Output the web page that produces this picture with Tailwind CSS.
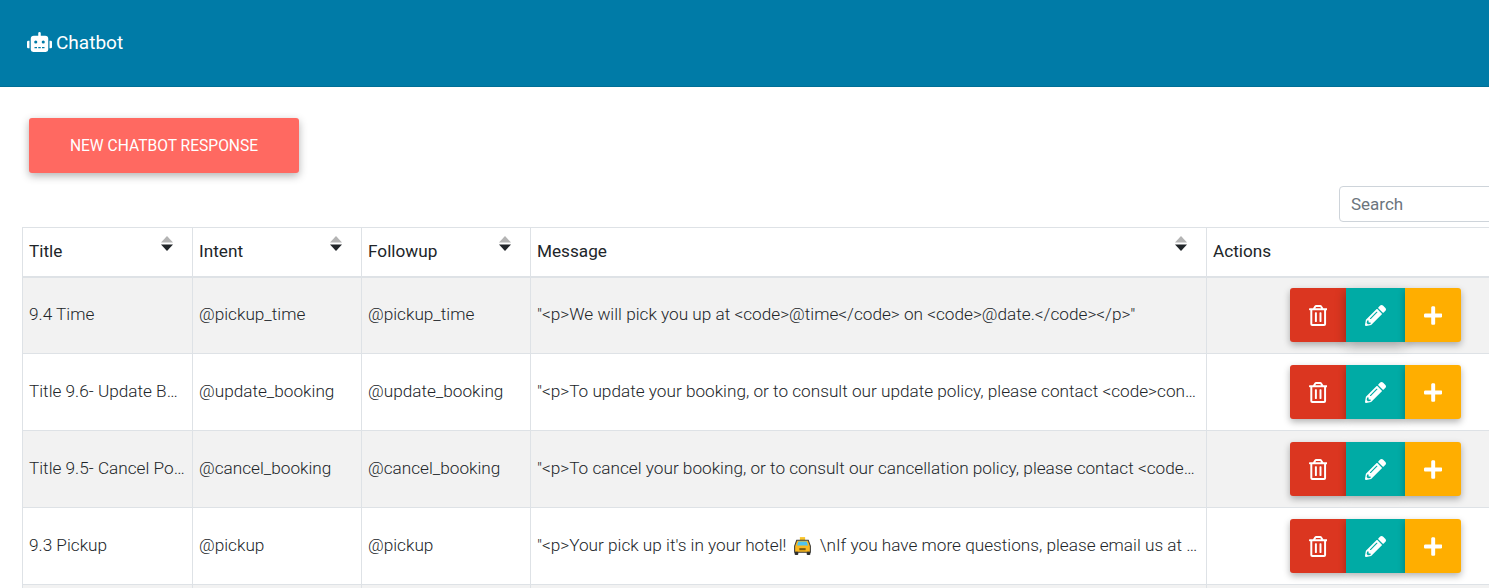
<!DOCTYPE html>
<html><head><meta charset="utf-8"><script src="https://cdn.jsdelivr.net/npm/@tailwindcss/browser@4"></script></head>
<body class="bg-white overflow-hidden font-['Roboto',sans-serif]">
<div class="h-[588px] w-[1489px] overflow-hidden">
<header class="h-[87px] bg-[#007BA7] border-b border-[#006f96] flex items-center pl-[27px] text-white text-[19px]">
<svg class="w-[25px] h-[20px] mr-[4px] -mt-[3px] fill-white" viewBox="0 0 640 512"><path d="M32,224H64V416H32A31.96166,31.96166,0,0,1,0,384V256A31.96166,31.96166,0,0,1,32,224Zm512-48V448a64.06328,64.06328,0,0,1-64,64H160a64.06328,64.06328,0,0,1-64-64V176a79.974,79.974,0,0,1,80-80H288V32a32,32,0,0,1,64,0V96H464A79.974,79.974,0,0,1,544,176ZM264,256a40,40,0,1,0-40,40A39.997,39.997,0,0,0,264,256Zm-8,128H192v32h64Zm96,0H288v32h64ZM456,256a40,40,0,1,0-40,40A39.997,39.997,0,0,0,456,256Zm-8,128H384v32h64ZM640,256V384a31.96166,31.96166,0,0,1-32,32H576V224h32A31.96166,31.96166,0,0,1,640,256Z"/></svg>
<span>Chatbot</span></header>
<main class="w-[1530px] pl-[22px] pt-[31px]">
<div class="pl-[7px]"><button class="w-[270px] h-[55px] pt-[2px] rounded-[3px] bg-[#FF6961] text-white text-[15.6px] shadow-[0_3px_8px_rgba(0,0,0,0.3)]">NEW CHATBOT RESPONSE</button></div>
<div class="flex justify-end mt-[13px] mb-[5px] h-[36px]"><input placeholder="Search" class="w-[191px] h-[36px] border border-[#ced4da] rounded-[4px] pl-[11px] text-[17px] placeholder:text-[#6c757d] outline-none"></div>
<table class="table-fixed border-collapse text-[17.2px] text-[#212529] w-[1508px]">
<colgroup><col class="w-[170px]"><col class="w-[169px]"><col class="w-[169px]"><col class="w-[676px]"><col></colgroup>
<thead><tr class="h-[49px] text-left">
<th class="relative border border-b-2 border-[#dee2e6] font-normal px-[6px]">Title<svg class="absolute right-[19px] top-[8px] w-[12px] h-[16px]" viewBox="0 0 12 16"><path d="M6 0l6 6.500H0z" fill="#b4b4b4"/><path d="M0 8.500h12L6 15z" fill="#212529"/></svg></th>
<th class="relative border border-b-2 border-[#dee2e6] font-normal px-[6px]">Intent<svg class="absolute right-[19px] top-[8px] w-[12px] h-[16px]" viewBox="0 0 12 16"><path d="M6 0l6 6.500H0z" fill="#b4b4b4"/><path d="M0 8.500h12L6 15z" fill="#212529"/></svg></th>
<th class="relative border border-b-2 border-[#dee2e6] font-normal px-[6px]">Followup<svg class="absolute right-[19px] top-[8px] w-[12px] h-[16px]" viewBox="0 0 12 16"><path d="M6 0l6 6.500H0z" fill="#b4b4b4"/><path d="M0 8.500h12L6 15z" fill="#212529"/></svg></th>
<th class="relative border border-b-2 border-[#dee2e6] font-normal px-[6px]">Message<svg class="absolute right-[19px] top-[8px] w-[12px] h-[16px]" viewBox="0 0 12 16"><path d="M6 0l6 6.500H0z" fill="#b4b4b4"/><path d="M0 8.500h12L6 15z" fill="#212529"/></svg></th>
<th class="border border-b-2 border-[#dee2e6] font-normal px-[6px]">Actions</th>
</tr></thead>
<tbody class="font-light">
<tr class="h-[77px] bg-[#f2f2f2]">
<td class="border border-[#dee2e6] px-[6px] truncate">9.4 Time</td><td class="border border-[#dee2e6] px-[6px] truncate">@pickup_time</td><td class="border border-[#dee2e6] px-[6px] truncate">@pickup_time</td><td class="border border-[#dee2e6] px-[6px] truncate">"&lt;p&gt;We will pick you up at &lt;code&gt;@time&lt;/code&gt; on &lt;code&gt;@date.&lt;/code&gt;&lt;/p&gt;"</td>
<td class="border border-[#dee2e6] pr-[45px]"><div class="flex justify-end mr-[23px]"><button class="w-[56px] h-[54px] bg-[#DB3620] rounded-l-[3px] flex items-center justify-center shadow-[0_3px_7px_rgba(0,0,0,0.3)]"><svg class="h-[21px] fill-white" viewBox="0 0 448 512"><path d="M268 416h24a12 12 0 0 0 12-12V188a12 12 0 0 0-12-12h-24a12 12 0 0 0-12 12v216a12 12 0 0 0 12 12zM432 80h-82.410l-34-56.700A48 48 0 0 0 274.410 0H173.590a48 48 0 0 0-41.160 23.300L98.410 80H16A16 16 0 0 0 0 96v16a16 16 0 0 0 16 16h16v336a48 48 0 0 0 48 48h288a48 48 0 0 0 48-48V128h16a16 16 0 0 0 16-16V96a16 16 0 0 0-16-16zM171.840 50.910A6 6 0 0 1 177 48h94a6 6 0 0 1 5.150 2.910L293.610 80H154.390zM368 464H80V128h288zm-212-48h24a12 12 0 0 0 12-12V188a12 12 0 0 0-12-12h-24a12 12 0 0 0-12 12v216a12 12 0 0 0 12 12z"/></svg></button><button class="w-[59px] h-[54px] bg-[#00ABA5] flex items-center justify-center shadow-[0_4px_10px_rgba(0,0,0,0.35)] relative"><svg class="h-[21px] fill-white" viewBox="0 0 512 512"><path d="M497.900 142.100l-46.100 46.100c-4.700 4.700-12.300 4.700-17 0l-111-111c-4.700-4.700-4.700-12.300 0-17l46.100-46.100c18.700-18.700 49.100-18.700 67.900 0l60.100 60.100c18.800 18.700 18.800 49.100 0 67.900zM284.200 99.800L21.600 362.400.4 483.900c-2.900 16.400 11.400 30.600 27.800 27.800l121.500-21.300 262.600-262.600c4.700-4.700 4.700-12.300 0-17l-111-111c-4.800-4.700-12.400-4.700-17.100 0zM124.100 339.900c-5.500-5.500-5.500-14.300 0-19.800l154-154c5.500-5.500 14.300-5.500 19.800 0s5.500 14.300 0 19.800l-154 154c-5.500 5.500-14.300 5.500-19.800 0zM88 424h48v36.300l-64.500 11.300-31.100-31.100L51.700 376H88v48z"/></svg></button><button class="w-[56px] h-[54px] bg-[#FFAE00] rounded-r-[3px] flex items-center justify-center shadow-[0_3px_7px_rgba(0,0,0,0.3)] relative"><svg class="h-[21px] fill-white" viewBox="0 0 448 512"><path d="M416 208H272V64c0-17.670-14.330-32-32-32h-32c-17.670 0-32 14.330-32 32v144H32c-17.670 0-32 14.330-32 32v32c0 17.670 14.330 32 32 32h144v144c0 17.670 14.330 32 32 32h32c17.670 0 32-14.330 32-32V304h144c17.670 0 32-14.330 32-32v-32c0-17.670-14.330-32-32-32z"/></svg></button></div></td>
</tr>
<tr class="h-[77px]">
<td class="border border-[#dee2e6] px-[6px] truncate">Title 9.6- Update Booking</td><td class="border border-[#dee2e6] px-[6px] truncate">@update_booking</td><td class="border border-[#dee2e6] px-[6px] truncate">@update_booking</td><td class="border border-[#dee2e6] px-[6px] truncate">"&lt;p&gt;To update your booking, or to consult our update policy, please contact &lt;code&gt;contact@example.com&lt;/code&gt;&lt;/p&gt;"</td>
<td class="border border-[#dee2e6] pr-[45px]"><div class="flex justify-end mr-[23px]"><button class="w-[56px] h-[54px] bg-[#DB3620] rounded-l-[3px] flex items-center justify-center shadow-[0_3px_7px_rgba(0,0,0,0.3)]"><svg class="h-[21px] fill-white" viewBox="0 0 448 512"><path d="M268 416h24a12 12 0 0 0 12-12V188a12 12 0 0 0-12-12h-24a12 12 0 0 0-12 12v216a12 12 0 0 0 12 12zM432 80h-82.410l-34-56.700A48 48 0 0 0 274.410 0H173.590a48 48 0 0 0-41.160 23.300L98.410 80H16A16 16 0 0 0 0 96v16a16 16 0 0 0 16 16h16v336a48 48 0 0 0 48 48h288a48 48 0 0 0 48-48V128h16a16 16 0 0 0 16-16V96a16 16 0 0 0-16-16zM171.840 50.910A6 6 0 0 1 177 48h94a6 6 0 0 1 5.150 2.910L293.610 80H154.390zM368 464H80V128h288zm-212-48h24a12 12 0 0 0 12-12V188a12 12 0 0 0-12-12h-24a12 12 0 0 0-12 12v216a12 12 0 0 0 12 12z"/></svg></button><button class="w-[59px] h-[54px] bg-[#00ABA5] flex items-center justify-center shadow-[0_3px_7px_rgba(0,0,0,0.3)] relative"><svg class="h-[21px] fill-white" viewBox="0 0 512 512"><path d="M497.900 142.100l-46.100 46.100c-4.700 4.700-12.300 4.700-17 0l-111-111c-4.700-4.700-4.700-12.300 0-17l46.100-46.100c18.700-18.700 49.100-18.700 67.900 0l60.100 60.100c18.800 18.700 18.800 49.100 0 67.900zM284.200 99.800L21.600 362.400.4 483.900c-2.900 16.400 11.400 30.600 27.800 27.800l121.500-21.300 262.600-262.600c4.700-4.700 4.700-12.300 0-17l-111-111c-4.800-4.700-12.400-4.700-17.100 0zM124.100 339.900c-5.500-5.500-5.500-14.300 0-19.800l154-154c5.500-5.500 14.300-5.500 19.800 0s5.500 14.300 0 19.800l-154 154c-5.500 5.500-14.300 5.500-19.800 0zM88 424h48v36.300l-64.500 11.300-31.100-31.100L51.700 376H88v48z"/></svg></button><button class="w-[56px] h-[54px] bg-[#FFAE00] rounded-r-[3px] flex items-center justify-center shadow-[0_3px_7px_rgba(0,0,0,0.3)] relative"><svg class="h-[21px] fill-white" viewBox="0 0 448 512"><path d="M416 208H272V64c0-17.670-14.330-32-32-32h-32c-17.670 0-32 14.330-32 32v144H32c-17.670 0-32 14.330-32 32v32c0 17.670 14.330 32 32 32h144v144c0 17.670 14.330 32 32 32h32c17.670 0 32-14.330 32-32V304h144c17.670 0 32-14.330 32-32v-32c0-17.670-14.330-32-32-32z"/></svg></button></div></td>
</tr>
<tr class="h-[77px] bg-[#f2f2f2]">
<td class="border border-[#dee2e6] px-[6px] truncate">Title 9.5- Cancel Policy</td><td class="border border-[#dee2e6] px-[6px] truncate">@cancel_booking</td><td class="border border-[#dee2e6] px-[6px] truncate">@cancel_booking</td><td class="border border-[#dee2e6] px-[6px] truncate">"&lt;p&gt;To cancel your booking, or to consult our cancellation policy, please contact &lt;code&gt;contact@example.com&lt;/code&gt;&lt;/p&gt;"</td>
<td class="border border-[#dee2e6] pr-[45px]"><div class="flex justify-end mr-[23px]"><button class="w-[56px] h-[54px] bg-[#DB3620] rounded-l-[3px] flex items-center justify-center shadow-[0_3px_7px_rgba(0,0,0,0.3)]"><svg class="h-[21px] fill-white" viewBox="0 0 448 512"><path d="M268 416h24a12 12 0 0 0 12-12V188a12 12 0 0 0-12-12h-24a12 12 0 0 0-12 12v216a12 12 0 0 0 12 12zM432 80h-82.410l-34-56.700A48 48 0 0 0 274.410 0H173.590a48 48 0 0 0-41.160 23.300L98.410 80H16A16 16 0 0 0 0 96v16a16 16 0 0 0 16 16h16v336a48 48 0 0 0 48 48h288a48 48 0 0 0 48-48V128h16a16 16 0 0 0 16-16V96a16 16 0 0 0-16-16zM171.840 50.910A6 6 0 0 1 177 48h94a6 6 0 0 1 5.150 2.910L293.610 80H154.390zM368 464H80V128h288zm-212-48h24a12 12 0 0 0 12-12V188a12 12 0 0 0-12-12h-24a12 12 0 0 0-12 12v216a12 12 0 0 0 12 12z"/></svg></button><button class="w-[59px] h-[54px] bg-[#00ABA5] flex items-center justify-center shadow-[0_3px_7px_rgba(0,0,0,0.3)] relative"><svg class="h-[21px] fill-white" viewBox="0 0 512 512"><path d="M497.900 142.100l-46.100 46.100c-4.700 4.700-12.300 4.700-17 0l-111-111c-4.700-4.700-4.700-12.300 0-17l46.100-46.100c18.700-18.700 49.100-18.700 67.900 0l60.100 60.100c18.800 18.700 18.800 49.100 0 67.900zM284.200 99.800L21.600 362.400.4 483.900c-2.900 16.400 11.400 30.600 27.800 27.800l121.500-21.300 262.600-262.600c4.700-4.700 4.700-12.300 0-17l-111-111c-4.800-4.700-12.400-4.700-17.100 0zM124.100 339.900c-5.500-5.500-5.500-14.300 0-19.800l154-154c5.500-5.500 14.300-5.500 19.800 0s5.500 14.300 0 19.800l-154 154c-5.500 5.500-14.300 5.500-19.800 0zM88 424h48v36.300l-64.500 11.300-31.100-31.100L51.700 376H88v48z"/></svg></button><button class="w-[56px] h-[54px] bg-[#FFAE00] rounded-r-[3px] flex items-center justify-center shadow-[0_3px_7px_rgba(0,0,0,0.3)] relative"><svg class="h-[21px] fill-white" viewBox="0 0 448 512"><path d="M416 208H272V64c0-17.670-14.330-32-32-32h-32c-17.670 0-32 14.330-32 32v144H32c-17.670 0-32 14.330-32 32v32c0 17.670 14.330 32 32 32h144v144c0 17.670 14.330 32 32 32h32c17.670 0 32-14.330 32-32V304h144c17.670 0 32-14.330 32-32v-32c0-17.670-14.330-32-32-32z"/></svg></button></div></td>
</tr>
<tr class="h-[77px]">
<td class="border border-[#dee2e6] px-[6px] truncate">9.3 Pickup</td><td class="border border-[#dee2e6] px-[6px] truncate">@pickup</td><td class="border border-[#dee2e6] px-[6px] truncate">@pickup</td><td class="border border-[#dee2e6] px-[6px] truncate">"&lt;p&gt;Your pick up it's in your hotel! <svg class="inline-block w-[21px] h-[21px] align-[-5px] ml-[1px] mr-[3px]" viewBox="0 0 20 20"><path d="M7.500 2h5v3h-5z" fill="#f9c52b"/><path d="M4.500 5h11l2 5.500v6h-15v-6z" fill="#fbb81f" stroke="#3a3a3a" stroke-width="1"/><path d="M6 6.200h8l1.300 3.800H4.700z" fill="#4fc3ef"/><rect x="2.500" y="16" width="3.500" height="3" rx="1" fill="#2f2f2f"/><rect x="14" y="16" width="3.500" height="3" rx="1" fill="#2f2f2f"/><rect x="7" y="12.500" width="6" height="2" fill="#7a5a10"/></svg> \nIf you have more questions, please email us at &lt;code&gt;contact@example.com&lt;/code&gt;&lt;/p&gt;"</td>
<td class="border border-[#dee2e6] pr-[45px]"><div class="flex justify-end mr-[23px]"><button class="w-[56px] h-[54px] bg-[#DB3620] rounded-l-[3px] flex items-center justify-center shadow-[0_3px_7px_rgba(0,0,0,0.3)]"><svg class="h-[21px] fill-white" viewBox="0 0 448 512"><path d="M268 416h24a12 12 0 0 0 12-12V188a12 12 0 0 0-12-12h-24a12 12 0 0 0-12 12v216a12 12 0 0 0 12 12zM432 80h-82.410l-34-56.700A48 48 0 0 0 274.410 0H173.590a48 48 0 0 0-41.160 23.300L98.410 80H16A16 16 0 0 0 0 96v16a16 16 0 0 0 16 16h16v336a48 48 0 0 0 48 48h288a48 48 0 0 0 48-48V128h16a16 16 0 0 0 16-16V96a16 16 0 0 0-16-16zM171.840 50.910A6 6 0 0 1 177 48h94a6 6 0 0 1 5.150 2.910L293.610 80H154.390zM368 464H80V128h288zm-212-48h24a12 12 0 0 0 12-12V188a12 12 0 0 0-12-12h-24a12 12 0 0 0-12 12v216a12 12 0 0 0 12 12z"/></svg></button><button class="w-[59px] h-[54px] bg-[#00ABA5] flex items-center justify-center shadow-[0_3px_7px_rgba(0,0,0,0.3)] relative"><svg class="h-[21px] fill-white" viewBox="0 0 512 512"><path d="M497.900 142.100l-46.100 46.100c-4.700 4.700-12.300 4.700-17 0l-111-111c-4.700-4.700-4.700-12.300 0-17l46.100-46.100c18.700-18.700 49.100-18.700 67.900 0l60.100 60.100c18.800 18.700 18.800 49.100 0 67.900zM284.200 99.800L21.600 362.400.4 483.900c-2.900 16.400 11.400 30.600 27.800 27.800l121.500-21.300 262.600-262.600c4.700-4.700 4.700-12.300 0-17l-111-111c-4.800-4.700-12.400-4.700-17.100 0zM124.100 339.900c-5.500-5.500-5.500-14.300 0-19.800l154-154c5.500-5.500 14.300-5.500 19.800 0s5.500 14.300 0 19.800l-154 154c-5.500 5.500-14.300 5.500-19.800 0zM88 424h48v36.300l-64.500 11.300-31.100-31.100L51.700 376H88v48z"/></svg></button><button class="w-[56px] h-[54px] bg-[#FFAE00] rounded-r-[3px] flex items-center justify-center shadow-[0_3px_7px_rgba(0,0,0,0.3)] relative"><svg class="h-[21px] fill-white" viewBox="0 0 448 512"><path d="M416 208H272V64c0-17.670-14.330-32-32-32h-32c-17.670 0-32 14.330-32 32v144H32c-17.670 0-32 14.330-32 32v32c0 17.670 14.330 32 32 32h144v144c0 17.670 14.330 32 32 32h32c17.670 0 32-14.330 32-32V304h144c17.670 0 32-14.330 32-32v-32c0-17.670-14.330-32-32-32z"/></svg></button></div></td>
</tr>
<tr class="h-[77px] bg-[#f2f2f2]"><td class="border border-[#dee2e6]"></td><td class="border border-[#dee2e6]"></td><td class="border border-[#dee2e6]"></td><td class="border border-[#dee2e6]"></td><td class="border border-[#dee2e6]"></td></tr>
</tbody></table>
</main></div>
</body></html>
